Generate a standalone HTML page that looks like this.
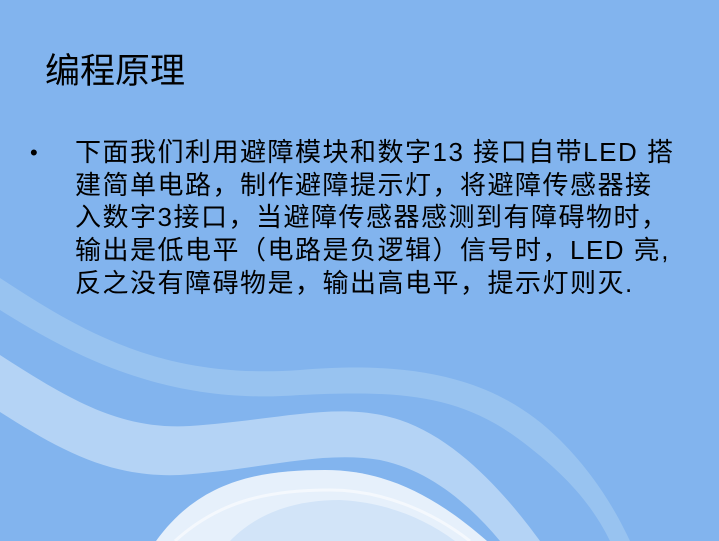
<!DOCTYPE html>
<html><head><meta charset="utf-8"><style>
html,body{margin:0;padding:0}
body{width:719px;height:541px;overflow:hidden;position:relative;background:#82b4ee;font-family:"Liberation Sans","Noto Sans CJK SC",sans-serif}
svg{position:absolute;left:0;top:0}
h1{position:absolute;left:45px;top:43px;margin:0;font-size:35px;font-weight:normal;color:#000}
.b{position:absolute;left:30px;top:136px;font-size:22px;line-height:33px;color:#000}
.t{position:absolute;left:75px;top:136px;font-size:26px;line-height:32.7px;color:#000;letter-spacing:1.5px;white-space:nowrap}
</style></head><body>
<svg width="719" height="541" viewBox="0 0 719 541">
<path d="M0 278 C80 330 160 380 300 370 C420 360 500 380 560 440 C600 480 620 520 630 541 L610 541 C590 500 560 470 520 440 C460 395 400 390 300 395 C170 405 80 360 0 310 Z" fill="#98c3f0"/>
<path d="M0 355 C70 400 120 430 190 426 C280 420 340 400 400 420 C460 440 510 500 540 541 L500 541 C470 505 430 470 380 460 C320 450 260 470 180 475 C110 478 60 450 0 412 Z" fill="#b4d3f5"/>
<path d="M156 541 C200 480 260 470 325 470 C390 470 440 500 487 541 Z" fill="#e6f0fb"/>
<path d="M230 541 C260 510 300 500 340 500 C380 502 420 515 455 541 Z" fill="#d2e4f8"/>
<path d="M175 541 C220 500 270 490 330 490 C380 490 430 510 470 541" fill="none" stroke="#f4f8fd" stroke-width="3"/>
</svg>
<h1>编程原理</h1>
<div class="b">•</div>
<div class="t">下面我们利用避障模块和数字13 接口自带LED 搭<br>建简单电路，制作避障提示灯，将避障传感器接<br>入数字3接口，当避障传感器感测到有障碍物时，<br>输出是低电平（电路是负逻辑）信号时，LED 亮,<br>反之没有障碍物是，输出高电平，提示灯则灭.</div>
</body></html>
